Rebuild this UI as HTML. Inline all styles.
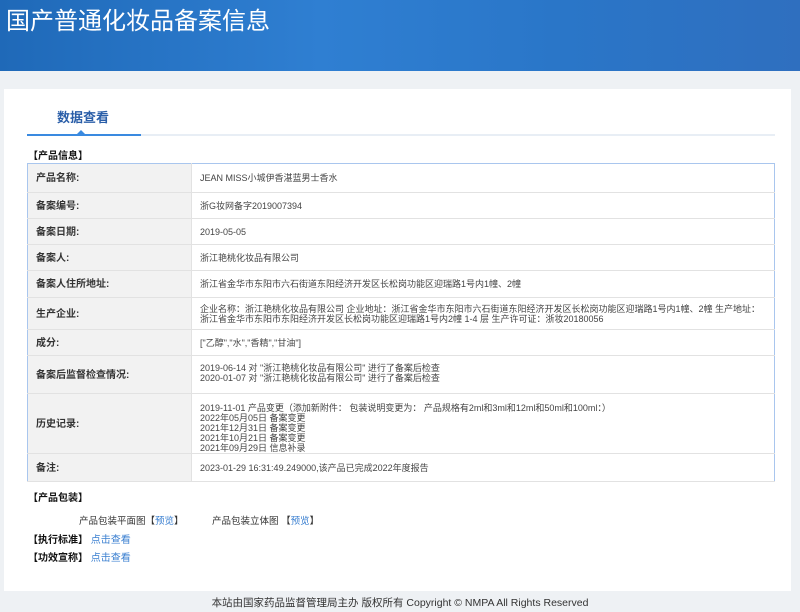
<!DOCTYPE html>
<html><head><meta charset="utf-8"><style>
*{margin:0;padding:0;box-sizing:border-box}
body{width:800px;height:612px;background:#eef1f4;font-family:"Liberation Sans","Noto Sans CJK SC",sans-serif;position:relative;overflow:hidden;color:#333}
.hd{position:absolute;left:0;top:0;width:800px;height:71px;background:linear-gradient(90deg,#1f69b8,#2f7fd2 40%,#2a76c8 70%,#2f6fbf)}
.hd h1{position:absolute;left:6px;top:5px;font-size:24px;line-height:34px;font-weight:normal;color:#fff}
.card{position:absolute;left:4px;top:89px;width:787px;height:502px;background:#fff}
.tab{position:absolute;left:57px;top:107px;font-size:13px;font-weight:bold;color:#2a5ea8}
.ln{position:absolute;left:27px;top:134px;width:748px;height:2px;background:#e8eef5}
.ln2{position:absolute;left:27px;top:134px;width:114px;height:2px;background:#3a8ae0}
.tri{position:absolute;left:77px;top:130px;width:0;height:0;border-left:4px solid transparent;border-right:4px solid transparent;border-bottom:4px solid #3a8ae0}
.sec{position:absolute;font-size:10px;line-height:12px;font-weight:bold;color:#111}
table{position:absolute;left:27px;top:163px;width:748px;border-collapse:collapse;border:1px solid #a9c6ee;font-size:9px}
td{border-bottom:1px solid #e2e2e2;padding:0 8px;vertical-align:middle;line-height:10px}
td.l{width:164px;background:#f2f2f2;font-weight:bold;font-size:10px;color:#333;border-right:1px solid #e2e2e2;padding-top:2px}
td.v{color:#444}
.t{position:absolute;font-size:9.5px;color:#333}
a{color:#3a7fd0;text-decoration:none}
.ft{position:absolute;left:0;top:595px;width:800px;text-align:center;font-size:10.5px;color:#333}
</style></head><body>
<div class="hd"><h1>国产普通化妆品备案信息</h1></div>
<div class="card"></div>
<div class="tab">数据查看</div>
<div class="ln"></div><div class="ln2"></div><div class="tri"></div>
<div class="sec" style="left:28px;top:151px">【产品信息】</div>
<table>
<tr style="height:29px"><td class="l">产品名称:</td><td class="v">JEAN MISS小城伊香湛蓝男士香水</td></tr>
<tr style="height:26px"><td class="l">备案编号:</td><td class="v">浙G妆网备字2019007394</td></tr>
<tr style="height:26px"><td class="l">备案日期:</td><td class="v">2019-05-05</td></tr>
<tr style="height:26px"><td class="l">备案人:</td><td class="v">浙江艳桃化妆品有限公司</td></tr>
<tr style="height:27px"><td class="l">备案人住所地址:</td><td class="v">浙江省金华市东阳市六石街道东阳经济开发区长松岗功能区迎瑞路1号内1幢、2幢</td></tr>
<tr style="height:32px"><td class="l">生产企业:</td><td class="v">企业名称：浙江艳桃化妆品有限公司 企业地址：浙江省金华市东阳市六石街道东阳经济开发区长松岗功能区迎瑞路1号内1幢、2幢 生产地址：浙江省金华市东阳市东阳经济开发区长松岗功能区迎瑞路1号内2幢 1-4 层 生产许可证：浙妆20180056</td></tr>
<tr style="height:26px"><td class="l">成分:</td><td class="v">["乙醇","水","香精","甘油"]</td></tr>
<tr style="height:38px"><td class="l">备案后监督检查情况:</td><td class="v" style="vertical-align:top;padding-top:7px">2019-06-14 对 "浙江艳桃化妆品有限公司" 进行了备案后检查<br>2020-01-07 对 "浙江艳桃化妆品有限公司" 进行了备案后检查</td></tr>
<tr style="height:60px"><td class="l">历史记录:</td><td class="v" style="vertical-align:top;padding-top:9px">2019-11-01 产品变更（添加新附件： 包装说明变更为： 产品规格有2ml和3ml和12ml和50ml和100ml：）<br>2022年05月05日 备案变更<br>2021年12月31日 备案变更<br>2021年10月21日 备案变更<br>2021年09月29日 信息补录</td></tr>
<tr style="height:28px"><td class="l">备注:</td><td class="v">2023-01-29 16:31:49.249000,该产品已完成2022年度报告</td></tr>
</table>
<div class="sec" style="left:28px;top:493px">【产品包装】</div>
<div class="t" style="left:79px;top:513px">产品包装平面图【<a>预览</a>】</div>
<div class="t" style="left:212px;top:513px">产品包装立体图 【<a>预览</a>】</div>
<div class="sec" style="left:28px;top:535px">【执行标准】 <a style="font-weight:normal">点击查看</a></div>
<div class="sec" style="left:28px;top:553px">【功效宣称】 <a style="font-weight:normal">点击查看</a></div>
<div class="ft">本站由国家药品监督管理局主办 版权所有 Copyright © NMPA All Rights Reserved</div>
</body></html>
